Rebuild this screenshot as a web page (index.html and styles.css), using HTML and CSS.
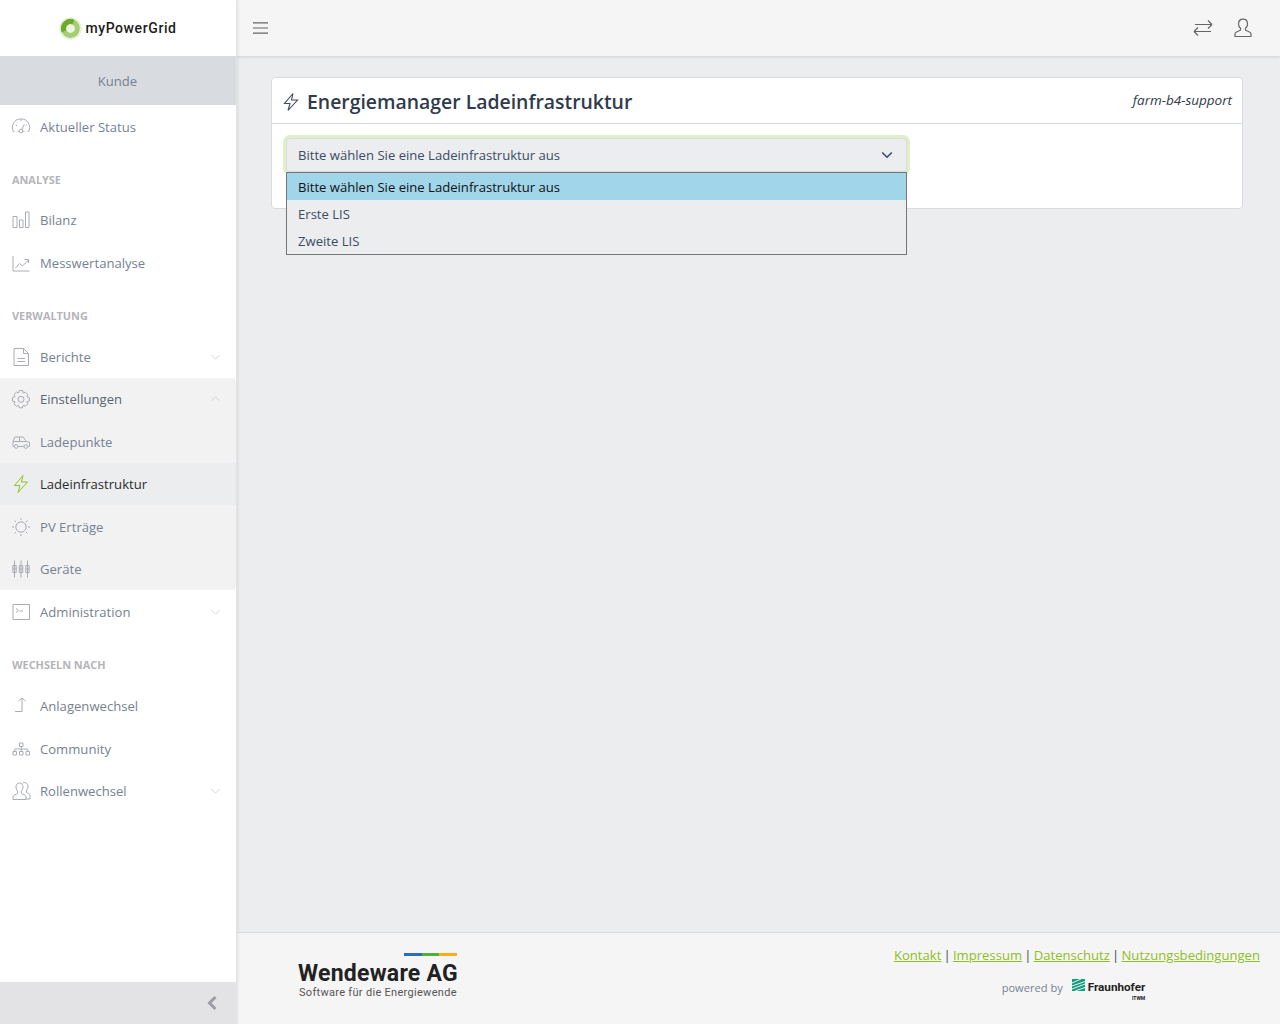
FILE: index.html
```html
<!DOCTYPE html>
<html lang="de">
<head>
<meta charset="utf-8">
<title>myPowerGrid</title>
<link rel="stylesheet" href="styles.css">
</head>
<body>
<div class="app">
  <aside class="sidebar">
    <div class="brand">
      <svg class="brand-logo" viewBox="0 0 24 24"><circle cx="12" cy="12" r="11.2" fill="#eef5e4" stroke="#d9e8c5" stroke-width=".8"/><circle cx="12" cy="12" r="7.200" fill="none" stroke="#a5cd72" stroke-width="5.200"/><path d="M15 5.400A7.200 7.200 0 0 0 5.400 15" fill="none" stroke="#6fa92c" stroke-width="5.200"/></svg>
      <span class="brand-name">myPowerGrid</span>
    </div>
    <div class="role">Kunde</div>
    <nav class="nav">
      <a class="item"><svg class="ico" viewBox="0 0 20 20"><g transform="translate(0 -1.500)"><path d="M3.500 16H2.200A8.500 8.500 0 0 1 10 3.500a8.500 8.500 0 0 1 7.800 12.500h-1.300M7.800 16H6.500M13.500 16h-1.300"/><circle cx="10" cy="15.500" r="1.800"/><path d="M10.800 14l2.400-5M4.800 9.500l1.200.8M14.500 10l1.200-.8M10 4v1.500"/></g></svg>Aktueller Status</a>
      <div class="title title-first">ANALYSE</div>
      <a class="item"><svg class="ico" viewBox="0 0 20 20"><path d="M2 6.500h4v11H2zM8.500 10h3.500v7.500H8.500zM14.500 2h3.500v15.500h-3.500z"/></svg>Bilanz</a>
      <a class="item"><svg class="ico" viewBox="0 0 20 20"><path d="M2 3v15h16.500M4.500 15l4-4.500 3 2.500 6-6M13.500 6.500H17.500V10"/></svg>Messwertanalyse</a>
      <div class="title title-second">VERWALTUNG</div>
      <a class="item"><svg class="ico" viewBox="0 0 20 20"><path d="M3 1.500h9.500L17.500 6.500v12H3zM12.500 1.500v5h5M6.500 11.500h7.500M6.500 14.500h7.500"/></svg>Berichte<svg class="chev" viewBox="0 0 12 7"><path d="M1 1l5 5 5-5"/></svg></a>
      <div class="group">
        <a class="item item-open"><svg class="ico" viewBox="0 0 20 20"><path d="M8.300 1.500h3.400l.6 2.500 2-.9 2.500 2.500-1 2 2.500 1v3.400l-2.500.8 1 2-2.500 2.600-2-1-.8 2.400H8.300l-.7-2.400-2 1L3 14.800l1-2-2.500-.8V8.600L4 7.600l-1-2 2.600-2.500 2 .9z"/><circle cx="10" cy="10.300" r="3"/></svg>Einstellungen<svg class="chev" viewBox="0 0 12 7"><path d="M1 6l5-5 5 5"/></svg></a>
        <a class="item"><svg class="ico" viewBox="0 0 20 20"><path d="M3.500 14.500H2V9.500l1.800-4.500h8.200l3.500 4.500 3 .8v4.200h-1.500M7 14.500h6M2 9.500h13.500M8.500 5v4.500"/><circle cx="5.200" cy="14.500" r="1.800"/><circle cx="14.800" cy="14.500" r="1.800"/></svg>Ladepunkte</a>
        <a class="item item-active"><svg class="ico ico-green" viewBox="0 0 20 20"><path d="M12 1.500L3.500 11.500h5.500l-2 7L16.500 8h-6z"/></svg>Ladeinfrastruktur</a>
        <a class="item"><svg class="ico" viewBox="0 0 20 20"><circle cx="10" cy="10" r="5.200"/><path d="M10 1v2M10 17v2M1 10h2M17 10h2M3.600 3.600l1.400 1.400M15 15l1.400 1.400M3.600 16.400L5 15M15 5l1.400-1.400"/></svg>PV Erträge</a>
        <a class="item"><svg class="ico" viewBox="0 0 20 20"><path d="M3.500 1.500v17M10 1.500v17M16.500 1.500v17M1.800 6.500h3.400v7H1.800zM8.300 6.500h3.400v7H8.300zM14.800 6.500h3.400v7h-3.400zM1.800 10h3.400M8.300 10h3.400M14.800 10h3.400"/></svg>Geräte</a>
      </div>
      <a class="item"><svg class="ico" viewBox="0 0 20 20"><path d="M2 2.500h16.500v15H2zM5 6.500l2.500 2-2.500 2M8.500 9h3.500"/></svg>Administration<svg class="chev" viewBox="0 0 12 7"><path d="M1 1l5 5 5-5"/></svg></a>
      <div class="title title-last">WECHSELN NACH</div>
      <a class="item"><svg class="ico" viewBox="0 0 20 20"><path d="M7.500 5L11 2l3.500 3M11 2v13.500H4"/></svg>Anlagenwechsel</a>
      <a class="item"><svg class="ico" viewBox="0 0 20 20"><path d="M8.500 4h3.500v3.500H8.500zM2 12.500h3.500V16H2zM8.500 12.500h3.500V16H8.500zM15 12.500h3.500V16H15zM10.250 7.500v5M3.750 12.500V10h13v2.500"/></svg>Community</a>
      <a class="item"><svg class="ico" viewBox="0 0 20 20"><path d="M2 18.500v-2.500c0-1.500 1.200-2 3.500-3l1.200-.8V10C5.500 9 5 7.500 5 6c0-2.500 1.500-4 3.500-4S12 3.500 12 6c0 1.500-.5 3-1.700 4v2.200l1.200.8c2.300 1 3.500 1.500 3.500 3v2.500zM11.500 2.200c.5-.5 1.200-.7 2-.7 2 0 3.500 1.500 3.500 4 0 1.500-.5 3-1.500 4v2l1.500.8c1.300.7 2 1.200 2 2.700v3H15"/></svg>Rollenwechsel<svg class="chev" viewBox="0 0 12 7"><path d="M1 1l5 5 5-5"/></svg></a>
    </nav>
    <div class="sidebar-foot"><svg class="foot-chev" viewBox="0 0 12 16"><path d="M9.500 2L3.500 8l6 6"/></svg></div>
  </aside>
  <div class="wrapper">
    <header class="topbar">
      <svg class="burger" viewBox="0 0 16 14"><path d="M0 1.500h16M0 7h16M0 12.500h16"/></svg>
      <div class="top-icons">
        <svg class="top-ico" viewBox="0 0 20 18"><path d="M1 12.500h17M1 12.500l4-4M1 12.500l4 4M19 5.500H2M19 5.500l-4-4M19 5.500l-4 4"/></svg>
        <svg class="top-ico user" viewBox="0 0 18 20"><path d="M1 18.500v-2.500c0-1 .8-1.800 2-2.300l3.500-1.500V10.300C5 9 4.500 7.500 4.500 6c0-3 1.800-4.800 4.500-4.800S13.500 3 13.500 6c0 1.500-.5 3-2 4.300v1.900l3.500 1.500c1.200.5 2 1.300 2 2.300v2.500z"/></svg>
      </div>
    </header>
    <main class="main">
      <section class="card">
        <div class="card-head">
          <h1 class="card-title"><svg class="title-ico" viewBox="0 0 20 20"><path d="M12 1.500L3.500 11.500h5.500l-2 7L16.500 8h-6z"/></svg>Energiemanager Ladeinfrastruktur</h1>
          <span class="card-user">farm-b4-support</span>
        </div>
        <div class="card-body">
          <div class="select">
            <div class="select-box">Bitte wählen Sie eine Ladeinfrastruktur aus<svg class="select-chev" viewBox="0 0 12 8"><path d="M1.200 1.500L6 6.200l4.800-4.700"/></svg></div>
            <ul class="options">
              <li class="option option-on">Bitte wählen Sie eine Ladeinfrastruktur aus</li>
              <li class="option">Erste LIS</li>
              <li class="option">Zweite LIS</li>
            </ul>
          </div>
        </div>
      </section>
    </main>
    <footer class="footer">
      <div class="ww">
        <div class="ww-bars"><i class="b1"></i><i class="b2"></i><i class="b3"></i></div>
        <div class="ww-name">Wendeware AG</div>
        <div class="ww-sub">Software für die Energiewende</div>
      </div>
      <div class="foot-right">
        <div class="links"><a>Kontakt</a> | <a>Impressum</a> | <a>Datenschutz</a> | <a>Nutzungsbedingungen</a></div>
        <div class="powered">
          <span>powered by</span>
          <svg class="fh-mark" viewBox="0 0 13 12"><rect width="13" height="12" fill="#179c7d"/><path d="M0 10L13 5M0 7L13 2.500M0 4L9 0M3 12L13 8.500" stroke="#fff" stroke-width=".9" fill="none"/></svg>
          <div class="fh"><b>Fraunhofer</b><small>ITWM</small></div>
        </div>
      </div>
    </footer>
  </div>
</div>
</body>
</html>
```

FILE: styles.css
```css
* { box-sizing: border-box; }
html, body { margin: 0; height: 100%; }
body {
  font-family: "Open Sans", "Noto Sans", sans-serif;
  font-size: 13.1px;
  color: #3c4b64;
  background: #ebedef;
  overflow: hidden;
}
.app { display: flex; height: 1024px; }

.sidebar {
  width: 237px;
  flex: none;
  display: flex;
  flex-direction: column;
  background: #fff;
  border-right: 1px solid #e2e3e6;
  box-shadow: 1px 0 3px rgba(0, 0, 21, .08);
  position: relative;
  z-index: 2;
}
.brand { height: 56px; display: flex; align-items: center; justify-content: center; gap: 3px; }
.brand-logo { width: 23px; height: 23px; flex: none; }
.brand-name { font-family: Roboto, sans-serif; font-weight: 500; font-size: 14px; letter-spacing: .6px; color: #1c1c1c; }
.role { height: 49px; background: #d8dbe0; color: #768192; display: flex; align-items: center; justify-content: center; padding-right: 1px; }
.nav { flex: 1; padding-top: 1px; }
.item {
  height: 42.5px;
  display: flex;
  align-items: center;
  padding: 0 12px 0 11px;
  color: #768192;
  white-space: nowrap;
}
.ico { width: 20px; height: 20px; margin-right: 9px; flex: none; fill: none; stroke: #a9acb3; stroke-width: 1; }
.ico-green { stroke: #8fc31f; }
.chev { width: 11px; height: 6px; margin-left: auto; margin-right: 3px; fill: none; stroke: #ccced2; stroke-width: 1; }
.title { padding: 23.700px 12px 0; font-size: 10.9px; line-height: 16px; font-weight: 700; color: #b4b4b8; }
.title-first { height: 50.700px; }
.title-second { height: 51.300px; }
.title-last { height: 52.200px; }
.group { background: #f2f2f3; border-radius: 0 4px 4px 0; }
.item-open { color: #5c6370; }
.item-active { background: #ebedef; color: #2c2c2c; }
.sidebar-foot { height: 42px; background: #e3e3e6; display: flex; align-items: center; justify-content: flex-end; padding-right: 18px; }
.foot-chev { width: 12px; height: 16px; fill: none; stroke: #9d9ea3; stroke-width: 3; }

.wrapper { flex: 1; min-width: 0; display: flex; flex-direction: column; }
.topbar {
  height: 56px;
  flex: none;
  background: #f5f5f5;
  box-shadow: 0 1px 3px rgba(0, 0, 21, .12);
  display: flex;
  align-items: center;
  justify-content: space-between;
  padding: 0 28px 0 16px;
  position: relative;
  z-index: 1;
}
.burger { width: 15px; height: 14px; fill: none; stroke: #666; stroke-width: 1.2; }
.top-icons { display: flex; align-items: center; gap: 21px; }
.top-ico { width: 20px; height: 18px; fill: none; stroke: #666; stroke-width: 1.2; }
.user { width: 18px; height: 20px; }

.main { flex: 1; padding: 21px 37px 0 34px; }
.card {
  background: #fff;
  border: 1px solid #d8dbe0;
  border-radius: 4px;
  height: 132px;
}
.card-head {
  height: 46px;
  border-bottom: 1px solid #d8dbe0;
  display: flex;
  align-items: center;
  justify-content: space-between;
  padding: 3px 10px 0 9px;
}
.card-title { margin: 0; font-size: 19.4px; font-weight: 600; color: #2f3a4c; display: flex; align-items: center; gap: 6px; line-height: 1; }
.title-ico { width: 20px; height: 20px; fill: none; stroke: #3c4b64; stroke-width: 1.1; }
.card-user { font-style: italic; font-size: 13.5px; color: #2f3a4c; margin-top: -5px; }
.card-body { padding: 14px 0 0 14px; }
.select { width: 621px; position: relative; }
.select-box {
  height: 34px;
  background: #ebedef;
  border: 1px solid #d8dbe0;
  border-radius: 4px;
  box-shadow: 0 0 0 3px #e0efc6;
  display: flex;
  align-items: center;
  justify-content: space-between;
  padding: 0 13px 0 11px;
  color: #3c4b64;
}
.select-chev { width: 12px; height: 8px; fill: none; stroke: #3c4b64; stroke-width: 1.6; }
.options {
  position: absolute;
  left: 0;
  right: 0;
  top: 34px;
  margin: 0;
  padding: 0;
  list-style: none;
  background: #ebedef;
  border: 1px solid #767676;
}
.option { height: 27px; line-height: 28px; padding-left: 11px; color: #3c4b64; }
.option-on { background: #a0d5ea; color: #111; }

.footer {
  height: 92px;
  flex: none;
  background: #f5f5f5;
  border-top: 1px solid #d8dbe0;
  display: flex;
  justify-content: space-between;
  padding: 0 20px 0 61px;
}
.ww { width: 161px; padding-top: 20px; }
.ww-bars { display: flex; justify-content: flex-end; height: 3px; margin-right: 2px; }
.ww-bars i { width: 17.700px; height: 3px; }
.b1 { background: #2a6ebb; }
.b2 { background: #4fae3c; }
.b3 { background: #fbae17; }
.ww-name { font-family: Roboto, sans-serif; font-weight: 700; font-size: 23px; line-height: 24px; color: #222; margin-top: 6px; white-space: nowrap; letter-spacing: .25px; }
.ww-sub { font-family: Roboto, sans-serif; font-weight: 400; font-size: 11px; line-height: 13px; color: #555; white-space: nowrap; padding-left: 1px; letter-spacing: .3px; }
.foot-right { display: flex; flex-direction: column; align-items: center; padding-top: 12px; }
.links { color: #3c4b64; line-height: 20px; word-spacing: -1.200px; }
.links a { color: #8fbe1f; text-decoration: underline; word-spacing: 0; }
.powered { display: flex; align-items: flex-start; margin-top: 14px; font-size: 11.1px; color: #768192; padding-right: 7px; }
.powered span { line-height: 18px; margin-right: 9px; }
.fh-mark { width: 13px; height: 12px; margin-right: 3px; flex: none; }
.fh { display: flex; flex-direction: column; align-items: flex-end; font-family: Roboto, sans-serif; color: #222; padding-top: 2px; }
.fh b { font-size: 11.7px; line-height: 13px; font-weight: 700; }
.fh small { font-size: 5px; line-height: 6px; font-weight: 700; margin-top: 1px; }
```
